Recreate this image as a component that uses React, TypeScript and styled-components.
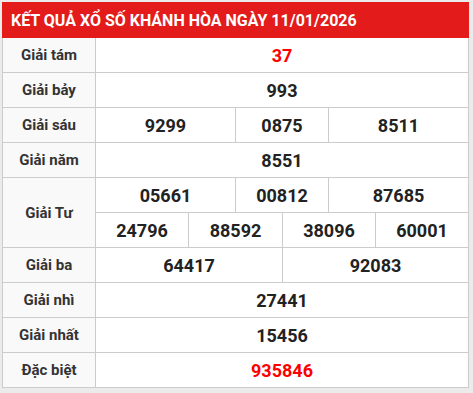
import styled, { createGlobalStyle } from "styled-components";

type Cell = { value: string; span: number; red?: boolean };
type Prize = { label: string; lines: Cell[][] };

const prizes: Prize[] = [
  { label: "Giải tám", lines: [[{ value: "37", span: 6, red: true }]] },
  { label: "Giải bảy", lines: [[{ value: "993", span: 6 }]] },
  {
    label: "Giải sáu",
    lines: [
      [
        { value: "9299", span: 2 },
        { value: "0875", span: 2 },
        { value: "8511", span: 2 },
      ],
    ],
  },
  { label: "Giải năm", lines: [[{ value: "8551", span: 6 }]] },
  {
    label: "Giải Tư",
    lines: [
      [
        { value: "05661", span: 2 },
        { value: "00812", span: 2 },
        { value: "87685", span: 2 },
      ],
      [
        { value: "24796", span: 1 },
        { value: "88592", span: 2 },
        { value: "38096", span: 2 },
        { value: "60001", span: 1 },
      ],
    ],
  },
  {
    label: "Giải ba",
    lines: [
      [
        { value: "64417", span: 3 },
        { value: "92083", span: 3 },
      ],
    ],
  },
  { label: "Giải nhì", lines: [[{ value: "27441", span: 6 }]] },
  { label: "Giải nhất", lines: [[{ value: "15456", span: 6 }]] },
  { label: "Đặc biệt", lines: [[{ value: "935846", span: 6, red: true }]] },
];

const GlobalStyle = createGlobalStyle`
  html, body {
    margin: 0;
    padding: 0;
    background: #ebebeb;
  }
  body {
    font-family: Roboto, "Liberation Sans", sans-serif;
  }
`;

const Page = styled.div`
  width: 473px;
  height: 393px;
  padding: 2px 4px 3px 2px;
  box-sizing: border-box;
`;

const Table = styled.div`
  display: grid;
  grid-template-columns: 92px 92px 46px 46px 45px 46px 92px;
  grid-auto-rows: 34px;
  gap: 1px;
  padding: 1px;
  background: #cccccc;
`;

const Header = styled.div`
  grid-column: 1 / -1;
  height: 36px;
  margin-top: -1px;
  margin-left: -1px;
  margin-right: -1px;
  display: flex;
  align-items: center;
  padding-left: 9px;
  background: #e31b1b;
  color: #ffffff;
  font-size: 16px;
  font-weight: 700;
`;

const Label = styled.div<{ $rows: number }>`
  grid-column: 1;
  grid-row: span ${(p) => p.$rows};
  display: flex;
  align-items: center;
  justify-content: center;
  background: #f9f9f9;
  color: #333333;
  font-size: 15px;
  font-weight: 700;
`;

const Number = styled.div<{ $span: number; $red?: boolean }>`
  grid-column: span ${(p) => p.$span};
  display: flex;
  align-items: center;
  justify-content: center;
  background: #ffffff;
  color: ${(p) => (p.$red ? "#ff0000" : "#222222")};
  font-size: 18px;
  font-weight: 700;
`;

const App = () => {
  return (
    <>
      <GlobalStyle />
      <Page>
        <Table>
          <Header>KẾT QUẢ XỔ SỐ KHÁNH HÒA NGÀY 11/01/2026</Header>
          {prizes.map((prize) =>
            prize.lines.map((line, i) => [
              i === 0 && (
                <Label key={prize.label} $rows={prize.lines.length}>
                  {prize.label}
                </Label>
              ),
              ...line.map((cell) => (
                <Number key={cell.value} $span={cell.span} $red={cell.red}>
                  {cell.value}
                </Number>
              )),
            ])
          )}
        </Table>
      </Page>
    </>
  );
};

export default App;
